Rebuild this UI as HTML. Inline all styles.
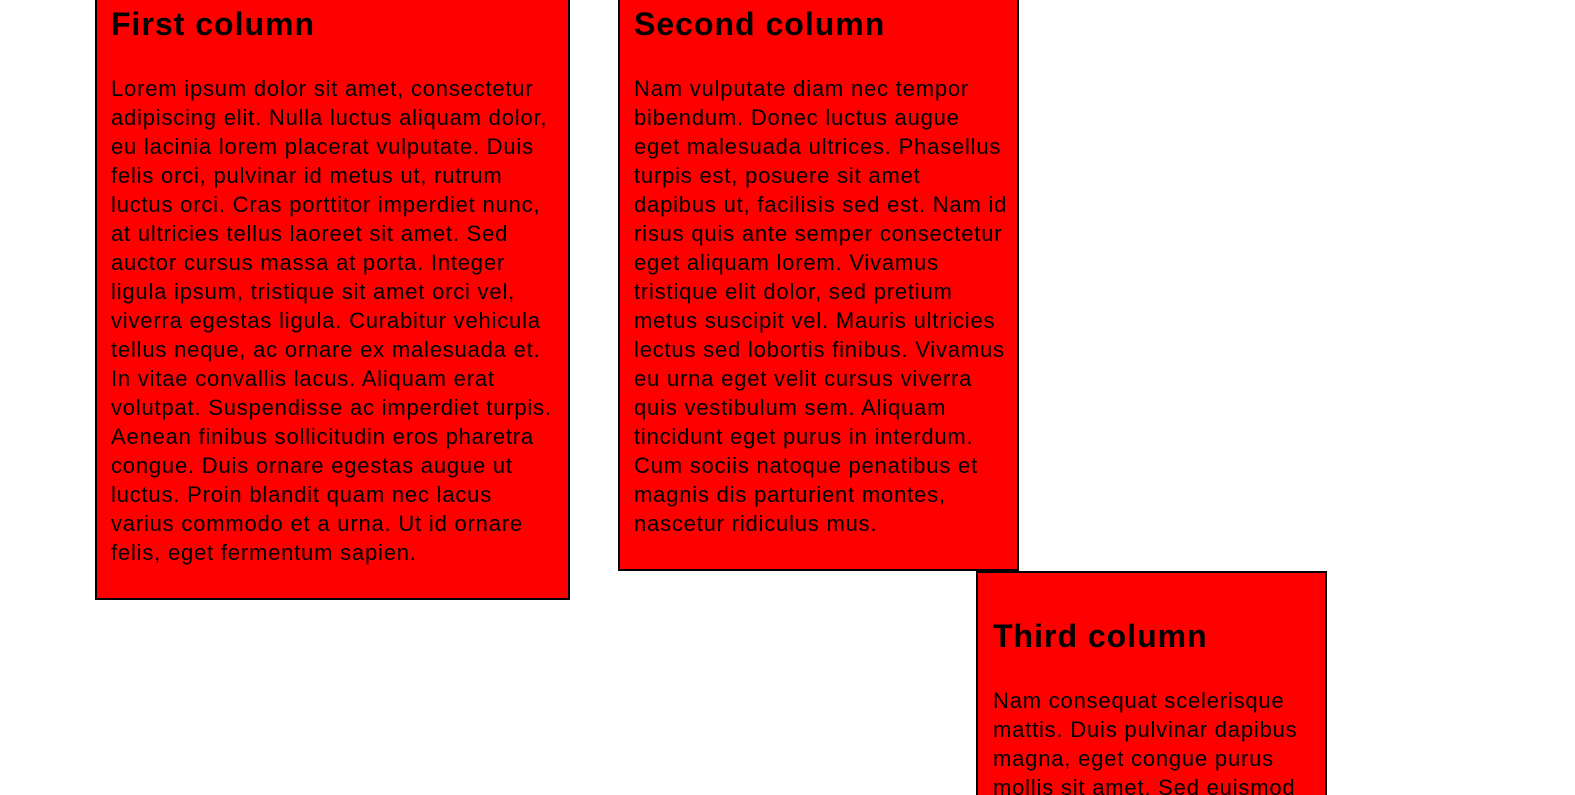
<!DOCTYPE html>
<html><head><meta charset="utf-8"><style>
html,body{margin:0;padding:0;background:#fff;width:1575px;height:795px;overflow:hidden;position:relative;font-family:"Liberation Sans",sans-serif;color:#000}
.box{position:absolute;background:#f00;border:2px solid #000;box-sizing:border-box}
.h{position:absolute;font-weight:bold;font-size:32px;line-height:40px;white-space:nowrap;letter-spacing:1px}
.p{position:absolute;font-size:22px;line-height:29px;white-space:nowrap;letter-spacing:0.8px}
</style></head><body>
<div class="box" style="left:95px;top:-10px;width:475px;height:610px"></div>
<div class="box" style="left:618px;top:-10px;width:401px;height:581px"></div>
<div class="box" style="left:976px;top:571px;width:351px;height:240px"></div>

<div class="h" style="left:111px;top:4px">First column</div>
<div class="p" style="left:111px;top:74px">Lorem ipsum dolor sit amet, consectetur<br>adipiscing elit. Nulla luctus aliquam dolor,<br>eu lacinia lorem placerat vulputate. Duis<br>felis orci, pulvinar id metus ut, rutrum<br>luctus orci. Cras porttitor imperdiet nunc,<br>at ultricies tellus laoreet sit amet. Sed<br>auctor cursus massa at porta. Integer<br>ligula ipsum, tristique sit amet orci vel,<br>viverra egestas ligula. Curabitur vehicula<br>tellus neque, ac ornare ex malesuada et.<br>In vitae convallis lacus. Aliquam erat<br>volutpat. Suspendisse ac imperdiet turpis.<br>Aenean finibus sollicitudin eros pharetra<br>congue. Duis ornare egestas augue ut<br>luctus. Proin blandit quam nec lacus<br>varius commodo et a urna. Ut id ornare<br>felis, eget fermentum sapien.</div>

<div class="h" style="left:634px;top:4px">Second column</div>
<div class="p" style="left:634px;top:74px">Nam vulputate diam nec tempor<br>bibendum. Donec luctus augue<br>eget malesuada ultrices. Phasellus<br>turpis est, posuere sit amet<br>dapibus ut, facilisis sed est. Nam id<br>risus quis ante semper consectetur<br>eget aliquam lorem. Vivamus<br>tristique elit dolor, sed pretium<br>metus suscipit vel. Mauris ultricies<br>lectus sed lobortis finibus. Vivamus<br>eu urna eget velit cursus viverra<br>quis vestibulum sem. Aliquam<br>tincidunt eget purus in interdum.<br>Cum sociis natoque penatibus et<br>magnis dis parturient montes,<br>nascetur ridiculus mus.</div>

<div class="h" style="left:993px;top:616px">Third column</div>
<div class="p" style="left:993px;top:686px">Nam consequat scelerisque<br>mattis. Duis pulvinar dapibus<br>magna, eget congue purus<br>mollis sit amet. Sed euismod</div>
</body></html>
